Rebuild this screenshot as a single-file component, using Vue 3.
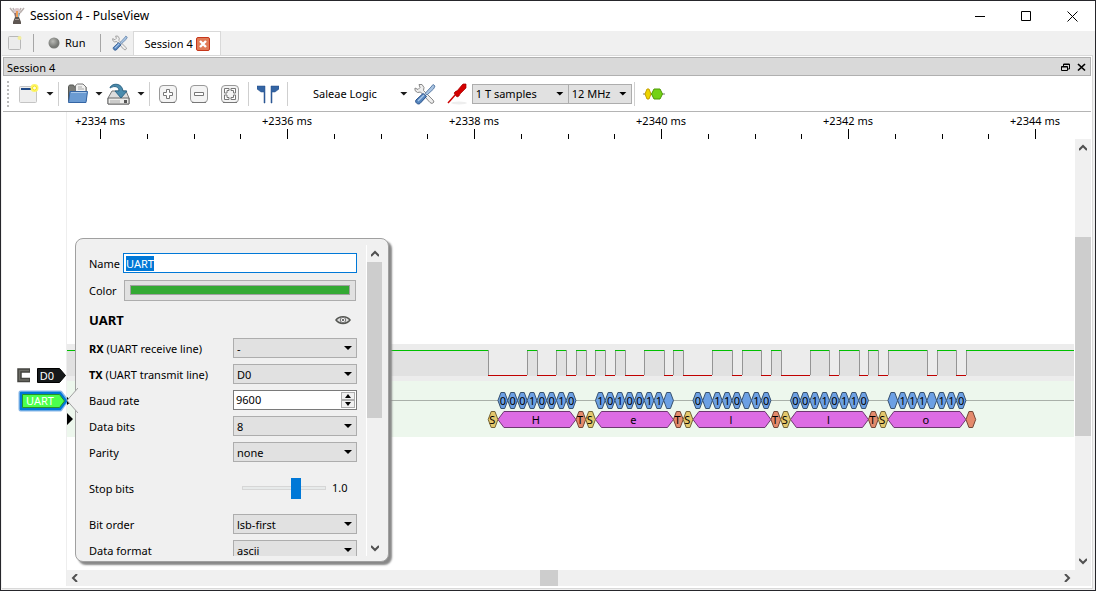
<script setup>
import { ref, onMounted } from 'vue'

const nameInput = ref(null)
const name = ref('UART')
const baud = ref('9600')
const stopBits = ref(1)
onMounted(() => { nameInput.value.focus({ preventScroll: true }); nameInput.value.select() })

const rowsTop = [
  { id: 'rx', strong: 'RX', label: ' (UART receive line)', value: '-' },
  { id: 'tx', strong: 'TX', label: ' (UART transmit line)', value: 'D0' }
]
const rowsMid = [
  { id: 'bits', label: 'Data bits', value: '8' },
  { id: 'parity', label: 'Parity', value: 'none' }
]
const rowsEnd = [
  { id: 'order', label: 'Bit order', value: 'lsb-first' },
  { id: 'format', label: 'Data format', value: 'ascii' }
]

/* Timeline geometry, in canvas pixels */
const END = 1007
const STEP = 187
const BIT = 9.75
const FIRST = 421.2
const majors = [2334, 2336, 2338, 2340, 2342, 2344].map((ms, i) => ({ ms, x: 33 + i * STEP }))
const minors = []
for (let i = 0; i < 22; i++) if (i % 4) minors.push(Math.round(33 + (i * STEP) / 4))

const frames = [
  { ch: 'H', bits: '00010010', shown: '00010010' },
  { ch: 'e', bits: '10100110', shown: '1010011 ' },
  { ch: 'l', bits: '00110110', shown: '0 110 10' },
  { ch: 'l', bits: '00110110', shown: '00110110' },
  { ch: 'o', bits: '11110110', shown: ' 111 110' }
]

const hex = (x, y, w, h, c) =>
  `${x},${y + h / 2} ${x + c},${y} ${x + w - c},${y} ${x + w},${y + h / 2} ${x + w - c},${y + h} ${x + c},${y + h}`

const levels = []
const bitBoxes = []
const wordBoxes = []
const marks = []
frames.forEach((f, i) => {
  const start = FIRST + i * BIT * 10
  levels.push(...('0' + f.bits + '1').split('').map((b, k) => ({ v: b === '1', x: start + k * BIT })))
  f.shown.split('').forEach((t, k) => bitBoxes.push({ t, x: start + (k + 1) * BIT }))
  wordBoxes.push({ t: f.ch, x: start + BIT })
  marks.push({ t: 'S', kind: 'start', x: start })
  marks.push({ t: i < 4 ? 'T' : '', kind: 'stop', x: start + 9 * BIT })
})

const runs = [{ v: true, x: 0, e: 0 }]
levels.forEach((l) => {
  const last = runs[runs.length - 1]
  if (last.v !== l.v) {
    last.e = Math.round(l.x)
    runs.push({ v: l.v, x: Math.round(l.x), e: 0 })
  }
})
runs[runs.length - 1].e = END
const highs = runs.filter((r) => r.v)
const lows = runs.filter((r) => !r.v)
const edges = runs.slice(1).map((r) => r.x)
const highLine = highs.map((r) => `M${r.x} 238.5H${r.e}`).join('')
const lowLine = lows.map((r) => `M${r.x} 263.5H${r.e}`).join('')
</script>

<template>
  <div class="window">
    <header class="titlebar">
      <svg class="app-icon" width="16" height="18" viewBox="0 0 16 18">
        <path d="M1 1l4 5M15 1l-4 5M4 1l2 4M12 1l-2 4" stroke="#b9b0ae" stroke-width="1.5" fill="none" />
        <circle cx="8" cy="4" r="3" fill="#d8c6cb" />
        <path d="M5 6h6l-1 4H6z" fill="#8a7476" />
        <path d="M7 4h2v7H7z" fill="#ef9a53" />
        <path d="M9 6h1v4H9z" fill="#8cc0d0" />
        <path d="M6 10h4l2 5v2H4v-2z" fill="#5e5652" />
        <path d="M6 12h4v1H6z" fill="#a39893" />
      </svg>
      <h1>Session 4 - PulseView</h1>
      <button class="cap" aria-label="Minimize"><svg width="11" height="11"><path d="M0 5.5h10" stroke="#000" /></svg></button>
      <button class="cap" aria-label="Maximize"><svg width="11" height="11"><path d="M.5.5h9v9h-9z" stroke="#000" fill="none" /></svg></button>
      <button class="cap" aria-label="Close window"><svg width="11" height="11"><path d="M.5.5l10 10M10.500.5l-10 10" stroke="#000" fill="none" /></svg></button>
    </header>

    <nav class="tabs">
      <button class="flat new-tab" aria-label="New session">
        <svg width="16" height="16" viewBox="0 0 16 16"><rect x="1.500" y="1.500" width="12" height="13" rx="1" fill="#ececec" stroke="#b8b8b8" /><circle cx="12.500" cy="3" r="2" fill="#f3ee9a" /></svg>
      </button>
      <i class="bar"></i>
      <button class="flat run">
        <svg width="12" height="12" viewBox="0 0 12 12"><defs><radialGradient id="ball" cx=".4" cy=".35"><stop offset="0" stop-color="#b9bab6" /><stop offset="1" stop-color="#777975" /></radialGradient></defs><circle cx="6" cy="6" r="5.500" fill="url(#ball)" /></svg>
        Run
      </button>
      <i class="bar"></i>
      <button class="flat tool" aria-label="Settings">
        <svg width="16" height="16" viewBox="0 0 22 22"><use href="#tools" /></svg>
      </button>
      <div class="tab">
        <span>Session 4</span>
        <button class="close" aria-label="Close session"><svg width="14" height="14" viewBox="0 0 14 14"><rect x=".5" y=".5" width="13" height="13" rx="1.500" fill="#e07b57" stroke="#c6361b" /><path d="M4 4l6 6M10 4l-6 6" stroke="#fff" stroke-width="2.400" /></svg></button>
      </div>
    </nav>

    <main class="pane">
      <div class="dock">
        <span>Session 4</span>
        <button class="flat" aria-label="Float"><svg width="9" height="9"><path d="M2.500 3V1h6v5H6.500M.5 3.500h6v4h-6zM.5 4h6M2.500 1.500h6" stroke="#000" fill="none" /></svg></button>
        <button class="flat" aria-label="Close panel"><svg width="9" height="9"><path d="M1 1l7 6.500M8 1L1 7.500" stroke="#000" stroke-width="1.700" /></svg></button>
      </div>

      <div class="toolbar">
        <i class="grip"></i>
        <button class="flat drop first" aria-label="New view">
          <svg width="22" height="22" viewBox="0 0 22 22"><rect x="1.500" y="3.500" width="17" height="16" rx="1" fill="#eee" stroke="#c4c4c4" /><path d="M3 5h12v2H3z" fill="#204a87" /><circle cx="16.500" cy="5" r="4" fill="#fdf56a" /><circle cx="16.500" cy="5" r="2" fill="#fffde0" stroke="#f4e21c" /></svg>
          <b class="arrow"></b>
        </button>
        <i class="sep"></i>
        <button class="flat drop" aria-label="Open">
          <svg width="22" height="22" viewBox="0 0 22 22"><path d="M1.500 18V3.500l1-1.500h4l1 2h11.500v14z" fill="#7b7c78" stroke="#555753" /><path d="M8.500 9V2.500l2-1.500h5.500l3 3v6z" fill="#f1f1f0" stroke="#777" /><path d="M11 4h4M11 6h6" stroke="#aaa" /><path d="M3 8.500h17.500l-1.500 11H1.500z" fill="#6b9bd2" stroke="#3465a4" /><path d="M4 9.500h15.500" stroke="#a7c6e8" /></svg>
          <b class="arrow"></b>
        </button>
        <button class="flat drop" aria-label="Save">
          <svg width="24" height="22" viewBox="0 0 24 22"><path d="M5 8h14l3 7v6H1v-6z" fill="#ddd" stroke="#777" stroke-linejoin="round" /><path d="M1 15h21v6H1z" fill="#ececea" stroke="#666" /><path d="M4 17v3M6 17v3M8 17v3M10 17v3M12 17v3" stroke="#aaa" /><path d="M17 17h3v3h-3z" fill="#555" /><path d="M3 5C4 0 15-1 16 8h4l-6 7-6-7h4C12 4 8 2 3 5z" fill="#4b8cad" stroke="#2e6687" /></svg>
          <b class="arrow"></b>
        </button>
        <i class="sep"></i>
        <button class="flat" aria-label="Zoom in"><svg width="20" height="20" viewBox="0 0 20 20"><use href="#key" /><path d="M8.500 5.500h3v3h3v3h-3v3h-3v-3h-3v-3h3z" fill="#fff" stroke="#777" /></svg></button>
        <button class="flat" aria-label="Zoom out"><svg width="20" height="20" viewBox="0 0 20 20"><use href="#key" /><path d="M5.500 8.500h9v3h-9z" fill="#fff" stroke="#777" /></svg></button>
        <button class="flat" aria-label="Zoom to fit"><svg width="20" height="20" viewBox="0 0 20 20"><use href="#key" /><path d="M4.500 9V4.500H9v2H7V9zM11 4.500h4.500V9h-2V6.500H11zM4.500 11v4.500H9v-2H7V11zM15.500 11v4.500H11v-2h2.500V11z" fill="#fff" stroke="#777" /></svg></button>
        <i class="sep"></i>
        <button class="flat cursors" aria-label="Show cursors"><svg width="22" height="20" viewBox="0 0 22 20"><path d="M0 2h8v17H7V8H4L0 5zM22 2h-8v17h1V8h3l4-3z" fill="#3465a4" stroke="#204a87" stroke-width=".5" /></svg></button>
        <i class="sep"></i>
        <button class="flat device">Saleae Logic<b class="arrow"></b></button>
        <button class="flat" aria-label="Configure device"><svg width="22" height="22" viewBox="0 0 22 22"><use href="#tools" /></svg></button>
        <button class="flat probe" aria-label="Channels"><svg width="20" height="22" viewBox="0 0 20 22"><ellipse cx="12" cy="20" rx="8" ry="1.500" fill="#eee" /><path d="M1 20L9 11" stroke="#c00" stroke-width="1.500" /><path d="M7 10l2-2 1 0 5-6 1-1 3 0 0 4-6 6-1 2-2 1z" fill="#d40000" stroke="#a40000" stroke-width=".7" /></svg></button>
        <span class="pick samples"><select aria-label="Sample count"><option>1 T samples</option></select></span>
        <span class="pick rate"><select aria-label="Sample rate"><option>12 MHz</option></select></span>
        <i class="sep last"></i>
        <button class="flat" aria-label="Add decoder"><svg width="22" height="12" viewBox="0 0 22 12"><path d="M0 6h22" stroke="#777" /><path d="M4 1h2l2 5-2 5H4L2 6z" fill="#edd400" stroke="#c4a000" /><path d="M11 1h6l2.500 5-2.500 5h-6L8.500 6z" fill="#73d216" stroke="#4e9a06" /></svg></button>
      </div>

      <div class="view">
        <aside class="headers">
          <svg class="labels" width="64" height="60" viewBox="0 0 64 60">
            <path d="M27 5.500H16.500v9.500H27" fill="none" stroke="#444440" stroke-width="4.500" />
            <path d="M26 5.500H16.500v9.500H26" fill="none" stroke="#6c6c66" stroke-width="1.500" />
            <path d="M34.500 3.500h22l6 7-6 7h-22z" fill="#16191a" stroke="#000" />
            <text x="44" y="15" fill="#fff" text-anchor="middle">D0</text>
            <path d="M17.500 27.500h40l6 8-6 9h-40z" fill="#4cff4c" stroke="#8ab8e8" stroke-width="4" stroke-linejoin="round" />
            <path d="M18 28h39l6 8-6 8H18z" fill="#4cff4c" stroke="#0078d7" stroke-width="2.500" stroke-linejoin="round" />
            <path d="M19.500 29.500h37l5 6.500-5 6.500h-37z" fill="none" stroke="#279027" />
            <text x="37" y="40" fill="#fff" text-anchor="middle">UART</text>
          </svg>
        </aside>
        <div class="canvas">
          <svg class="traces" height="458">
            <g class="ruler">
              <g v-for="m in majors" :key="m.ms">
                <text :x="m.x" y="13" text-anchor="middle">+{{ m.ms }} ms</text>
                <rect :x="m.x" y="17" width="1" height="10" />
              </g>
              <rect v-for="x in minors" :key="x" :x="x" y="22" width="1" height="5" />
            </g>
            <rect x="0" y="232" :width="END" height="37" fill="#ececec" />
            <rect x="0" y="269" :width="END" height="56" fill="#edf7ed" />
            <rect v-for="r in highs" :key="r.x" :x="r.x" y="239" :width="r.e - r.x" height="25" fill="#e1e1e1" />
            <rect v-for="x in edges" :key="x" :x="x" y="238" width="1" height="25" fill="#949494" />
            <path class="high" :d="highLine" />
            <path class="low" :d="lowLine" />
            <rect x="0" y="288" :width="END" height="1" fill="#a9b0a9" />
            <path d="M0 285l5 4-5 4zM0 301l6 6-6 6z" />
            <g v-for="b in bitBoxes" :key="b.x">
              <polygon class="bit" :points="hex(b.x, 280.5, BIT, 16, 3)" />
              <text :x="b.x + 5" y="293" text-anchor="middle">{{ b.t }}</text>
            </g>
            <g v-for="w in wordBoxes" :key="w.x">
              <polygon class="word" :points="hex(w.x, 299.5, BIT * 8, 16, 6)" />
              <text :x="w.x + 38" y="312" text-anchor="middle">{{ w.t }}</text>
            </g>
            <g v-for="m in marks" :key="m.x">
              <polygon :class="m.kind" :points="hex(m.x, 299.5, BIT, 16, 3)" />
              <text :x="m.x + 4" y="312" text-anchor="middle">{{ m.t }}</text>
            </g>
          </svg>
          <div class="hbar">
            <button aria-label="Scroll left"><svg width="8" height="8"><path d="M6 0L2 4l4 4" /></svg></button>
            <i class="thumb"></i>
            <button aria-label="Scroll right"><svg width="8" height="8"><path d="M2 0l4 4-4 4" /></svg></button>
          </div>
        </div>
        <div class="vbar main">
          <button aria-label="Scroll up"><svg width="8" height="8"><path d="M0 6l4-4 4 4" /></svg></button>
          <i class="thumb"></i>
          <button aria-label="Scroll down"><svg width="8" height="8"><path d="M0 2l4 4 4-4" /></svg></button>
        </div>
      </div>
    </main>

    <section class="popup" aria-label="Decoder settings">
      <svg class="notch" width="12" height="26" viewBox="0 0 12 26"><path d="M12 0L1 12.500 12 25z" fill="#f0f0f0" /><path d="M12 0L1 12.500 12 25" fill="none" stroke="#a0a0a0" /></svg>
      <form class="form" @submit.prevent>
        <div class="row name"><label for="name">Name</label><input id="name" ref="nameInput" v-model="name" type="text" spellcheck="false" /></div>
        <div class="row color"><label for="color">Color</label><button id="color" type="button" aria-label="Color"><i></i></button></div>
        <div class="row head"><h2>UART</h2><svg width="16" height="10" viewBox="0 0 16 10"><path d="M1 5C4 .5 12 .5 15 5 12 9.500 4 9.500 1 5z" fill="#ddd" stroke="#555753" stroke-width="1.500" /><circle cx="8" cy="5" r="2.700" fill="#eee" stroke="#777" /><circle cx="8" cy="5" r="1" fill="#444" /></svg></div>
        <div v-for="r in rowsTop" :key="r.id" class="row">
          <label :for="r.id"><strong>{{ r.strong }}</strong>{{ r.label }}</label>
          <span class="pick"><select :id="r.id"><option>{{ r.value }}</option></select></span>
        </div>
        <div class="row">
          <label for="baud">Baud rate</label>
          <span class="spin"><input id="baud" v-model="baud" type="text" /><span class="steps"><button type="button" aria-label="Increase"><svg width="6" height="4"><path d="M0 4l3-4 3 4z" /></svg></button><button type="button" aria-label="Decrease"><svg width="6" height="4"><path d="M0 0l3 4 3-4z" /></svg></button></span></span>
        </div>
        <div v-for="r in rowsMid" :key="r.id" class="row">
          <label :for="r.id">{{ r.label }}</label>
          <span class="pick"><select :id="r.id"><option>{{ r.value }}</option></select></span>
        </div>
        <div class="row slide">
          <label for="stop">Stop bits</label>
          <span class="range"><input id="stop" v-model="stopBits" type="range" min="0" max="1.5" step="0.5" /><output for="stop">1.0</output></span>
        </div>
        <div v-for="r in rowsEnd" :key="r.id" class="row">
          <label :for="r.id">{{ r.label }}</label>
          <span class="pick"><select :id="r.id"><option>{{ r.value }}</option></select></span>
        </div>
      </form>
      <div class="vbar small">
        <button aria-label="Scroll settings up"><svg width="8" height="8"><path d="M0 6l4-4 4 4" /></svg></button>
        <i class="thumb"></i>
        <button aria-label="Scroll settings down"><svg width="8" height="8"><path d="M0 2l4 4 4-4" /></svg></button>
      </div>
    </section>

    <svg class="defs" width="0" height="0">
      <defs>
        <g id="key"><rect x="1.500" y="1.500" width="17" height="17" rx="3.500" fill="#f4f4f4" stroke="#999" /><path d="M3 18.500h14" stroke="#777" /></g>
        <g id="tools">
          <path d="M5 1.500l3 0 2 3-.5 3L19 17l1 2-2 1.500-2-1L6.500 9l-3 .5L1 7.500 1 5l3 1.500 2-2z" fill="#eee" stroke="#888" />
          <path d="M19 1.500l2 1.500-1.500 3L13 12l-2-1.500L17 4z" fill="#a9c4e2" stroke="#5d7fa8" />
          <path d="M9 10.500l3.500 3L6 20.500c-2 1.500-5.500-1-4-3.500z" fill="#5585bd" stroke="#27508a" />
          <path d="M4 18l6-6" stroke="#a9c8ec" stroke-width="1.500" />
        </g>
      </defs>
    </svg>
  </div>
</template>

<style>
html, body, #app { height: 100%; }
body { overflow: hidden; }
</style>

<style scoped>
* { box-sizing: border-box; }
.window { position: relative; height: 100%; display: flex; flex-direction: column; border: 1px solid #26262b; background: #f0f0f0; font: 11px/14px "Noto Sans", "Open Sans", sans-serif; color: #000; }
button, input, select, output { font: inherit; color: inherit; margin: 0; }
button { padding: 0; border: 0; background: none; display: flex; align-items: center; justify-content: center; }
svg { display: block; flex: none; }
.titlebar { flex: none; height: 30px; background: #fff; display: flex; align-items: center; padding-left: 8px; }
h1 { flex: 1; margin: 0 0 0 5px; font-size: 12px; line-height: 16px; font-weight: 400; }
.cap { width: 46px; height: 28px; }
.tabs { flex: none; height: 24px; display: flex; align-items: center; padding-left: 6px; }
.bar { width: 1px; height: 18px; background: #a6a6a6; }
.new-tab { width: 16px; margin-right: 10px; }
.run { gap: 5px; padding: 0 15px 0 14px; }
.tool { padding: 0 5px 0 11px; }
.tab { height: 24px; width: 88px; display: flex; align-items: center; gap: 3px; padding-left: 10px; background: #fff; border: 1px solid #d9d9d9; border-bottom: 0; }
.pane { flex: 1; min-height: 0; display: flex; flex-direction: column; margin: 0 2px 1px 1px; padding: 1px 1px 2px; background: #fff; border: 1px solid #d9d9d9; border-left: 0; }
.dock { flex: none; height: 19px; display: flex; align-items: center; gap: 7px; padding: 2px 4px 0 3px; background: #d9d9d9; border: 1px solid #b0b0b0; }
.dock span { flex: 1; }
.toolbar { flex: none; height: 36px; display: flex; align-items: center; border-bottom: 1px solid #b4b4b4; padding-left: 4px; }
.grip { width: 2px; height: 26px; margin-right: 9px; background: repeating-linear-gradient(#bbb 0 2px, #fff 2px 4px); }
.sep { width: 1px; height: 24px; background: #cfcfcf; margin: 0 8px; }
.drop { gap: 6px; margin-right: 4px; }
.drop + .sep { margin-left: 0; }
.arrow { width: 8px; height: 4px; background: #1a1a1a; clip-path: polygon(0 0, 100% 0, 50% 100%); }
.toolbar > .flat:not(.drop) + .flat { margin-left: 11px; }
.toolbar > .device + .flat { margin-left: 6px !important; }
.device { gap: 23px; padding-left: 17px; }
.probe { margin-right: 5px; }
.pick { position: relative; display: flex; }
.pick select { appearance: none; width: 100%; height: 20px; border: 1px solid #adadad; border-radius: 0; background: #e1e1e1; padding: 1px 16px 0 3px; outline: 0; }
.pick::after { content: ""; position: absolute; right: 5px; top: 8px; width: 8px; height: 4px; background: #000; clip-path: polygon(0 0, 100% 0, 50% 100%); pointer-events: none; }
.samples { width: 97px; }
.rate { width: 64px; margin-left: -1px; }
.sep.last { margin: 0 8px 0 2px; }
.view { flex: 1; min-height: 0; display: flex; }
.headers { flex: none; width: 64px; border-right: 1px solid #eee; padding-top: 253px; }
.labels { overflow: visible; }
.canvas { flex: 1; min-width: 0; display: flex; flex-direction: column; justify-content: space-between; }
.traces { width: 100%; }
.high { stroke: #00c000; stroke-width: 1px; fill: none; }
.low { stroke: #c00000; stroke-width: 1px; fill: none; }
.bit { fill: #6ca0e4; stroke: #36506f; }
.word { fill: #dd6ce4; stroke: #6f3672; }
.start { fill: #e4c86c; stroke: #726436; }
.stop { fill: #e48a6c; stroke: #724536; }
.hbar { height: 16px; display: flex; background: #f0f0f0; }
.hbar button { width: 16px; height: 16px; }
.hbar .thumb { width: 18px; margin: 0 auto 0 45.3%; background: #cdcdcd; }
.vbar { flex: none; width: 16px; display: flex; flex-direction: column; background: #f0f0f0; }
.vbar button { width: 16px; height: 17px; }
.vbar .thumb { height: 199px; margin: 81px 0 auto; background: #cdcdcd; }
.vbar.main { margin-top: 27px; padding-bottom: 17px; }
.vbar path, .hbar path { fill: none; stroke: #505050; stroke-width: 2; }
.popup { position: absolute; left: 74px; top: 237px; width: 314px; height: 324px; display: flex; padding: 6px 6px 5px; border: 1px solid #a0a0a0; border-radius: 8px; background: #f0f0f0; box-shadow: 3px 3px 2px #888; }
.notch { position: absolute; left: -10px; top: 149px; }
.form { flex: 1; min-width: 0; overflow: hidden; padding: 8px 9px 0 7px; display: flex; flex-direction: column; gap: 6px; }
.row { flex: none; height: 20px; display: grid; grid-template-columns: 1fr 124px; align-items: center; }
.row > label { padding-top: 2px; line-height: 12px; }
.name, .color { grid-template-columns: 34px 1fr; }
.name input { width: 100%; height: 20px; border: 1px solid #0078d7; padding: 1px 2px; outline: 0; background: #fff; }
.name input::selection { background: #0078d7; color: #fff; }
.color { height: 22px; }
.color button { height: 21px; margin: 0 1px; padding: 0 5px; background: #e1e1e1; border: 1px solid #adadad; }
.color i { flex: 1; height: 10px; background: #33a933; border: 1px solid #a0a0a0; }
.head { height: 25px; grid-template-columns: 1fr auto; padding-right: 6px; }
h2 { margin: 0; font-size: 13px; line-height: 18px; font-weight: 700; }
.spin { display: flex; height: 20px; border: 1px solid #7a7a7a; background: #fff; padding: 1px; }
.spin input { flex: 1; min-width: 0; border: 0; padding: 1px; outline: 0; background: none; }
.steps { display: flex; flex-direction: column; width: 14px; }
.steps button { flex: 1; background: #f0f0f0; border: 1px solid #adadad; }
.slide { height: 40px; }
.range { display: flex; align-items: center; gap: 6px; padding-left: 9px; }
.range input { appearance: none; width: 84px; height: 22px; background: none; }
.range input::-webkit-slider-runnable-track { height: 4px; background: #e7eaea; border: 1px solid #d6d6d6; }
.range input::-webkit-slider-thumb { appearance: none; width: 10px; height: 21px; margin-top: -9px; background: #0078d7; }
.small { margin: 0; border-left: 1px solid #fff; }
.small .thumb { height: 156px; margin-top: 0; }
.defs { position: absolute; }
</style>
